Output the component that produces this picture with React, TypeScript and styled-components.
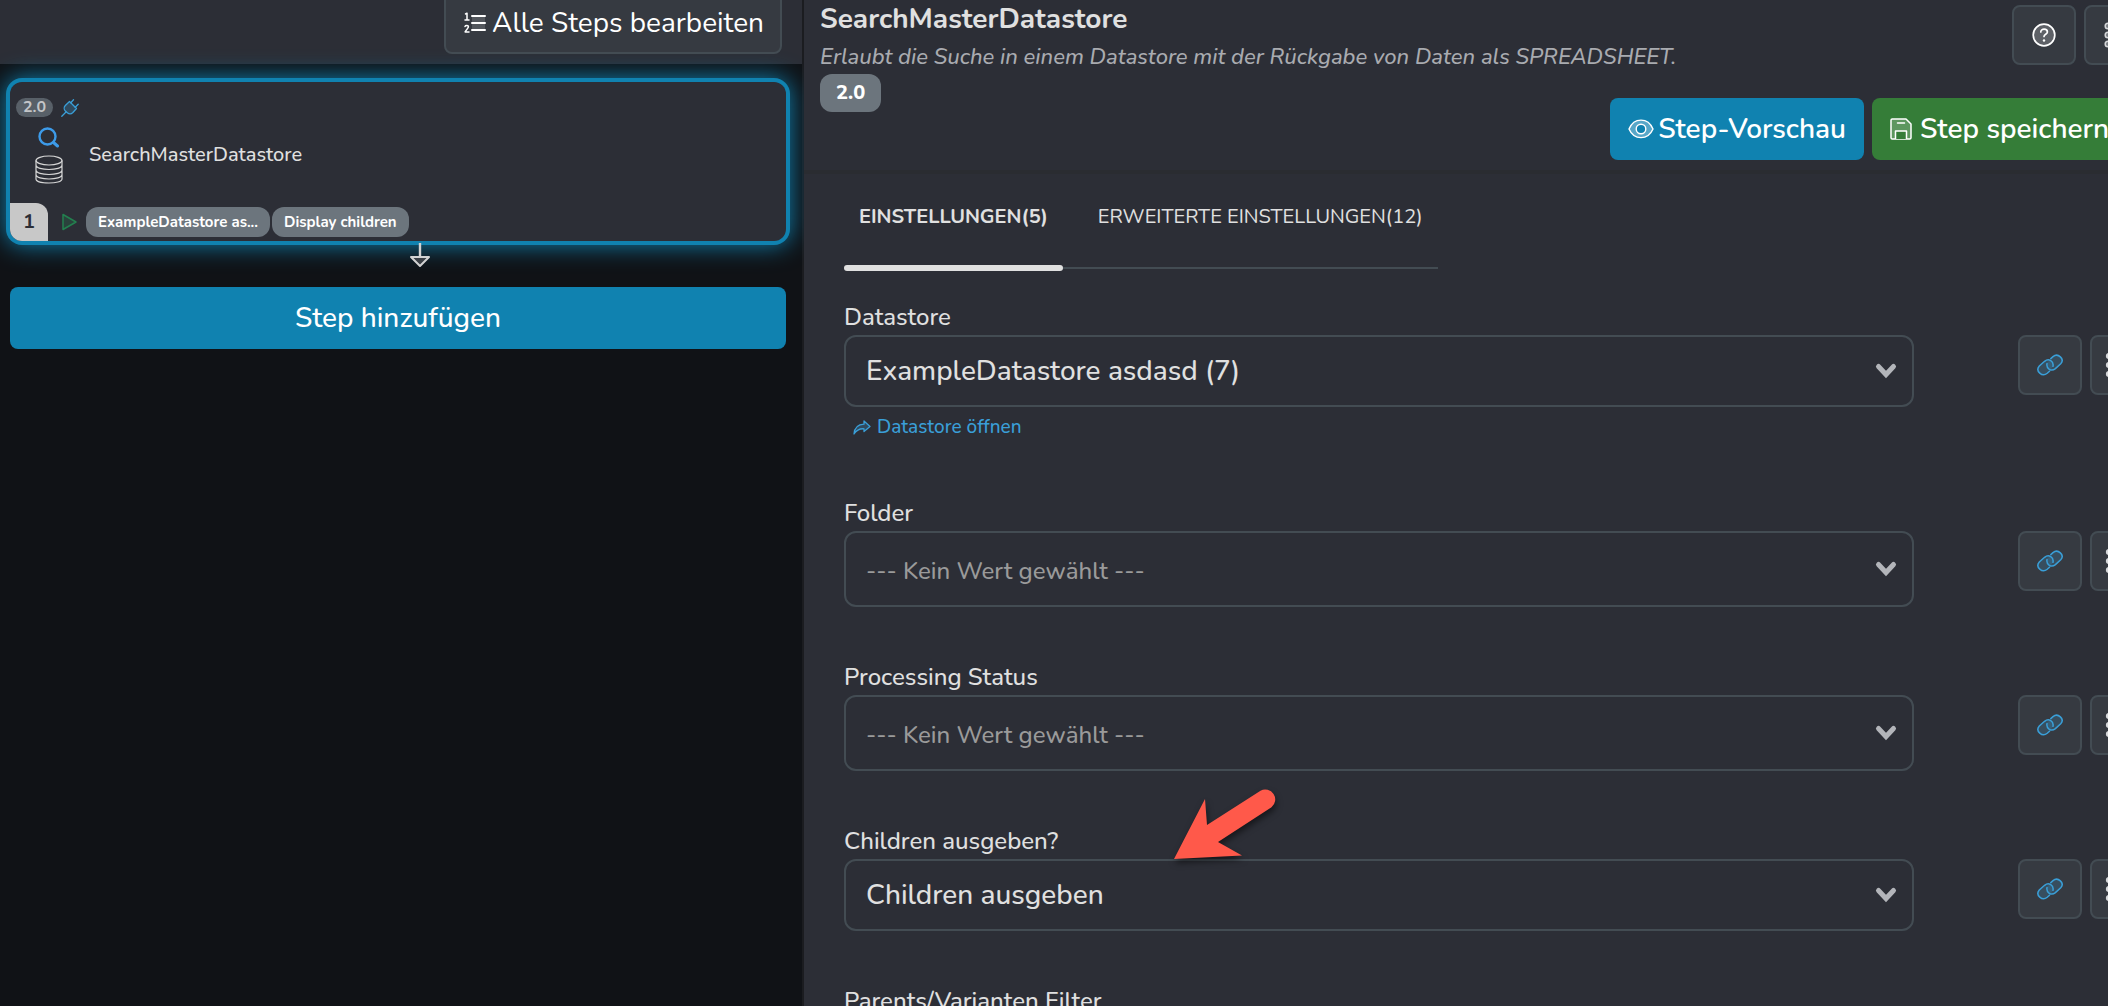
import React from 'react';
import styled, { createGlobalStyle, css } from 'styled-components';

const color = {
  page: '#101216',
  panel: '#2c2e36',
  raised: '#363a41',
  line: '#434c53',
  text: '#e0e0e0',
  muted: '#9a9a9a',
  primary: '#1082b0',
  success: '#357d38',
  link: '#3a9fd8',
  badge: '#6c757d',
};

const GlobalStyle = createGlobalStyle`
  *, *::before, *::after { box-sizing: border-box; }
  body {
    margin: 0;
    background: ${color.page};
    color: ${color.text};
    font-family: Nunito, Lato, "Open Sans", sans-serif;
    font-size: 24px;
    line-height: 32px;
    overflow: hidden;
  }
  button, select { font-family: inherit; margin: 0; }
  svg { display: block; flex: none; }
`;

const Workspace = styled.div`
  display: grid;
  grid-template-columns: 804px minmax(0, 1fr);
  height: 100vh;
  overflow: hidden;
`;

const StepsPanel = styled.aside`
  border-right: 2px solid #1b1c20;
`;

const StepsToolbar = styled.header`
  display: flex;
  align-items: flex-end;
  justify-content: flex-end;
  height: 64px;
  padding: 0 20px 10px;
  overflow: hidden;
  background: ${color.panel};
`;

const buttonBase = css`
  display: flex;
  flex: none;
  align-items: center;
  height: 62px;
  border: 0;
  border-radius: 8px;
  color: #fff;
  font-size: 28px;
  line-height: 36px;
  white-space: nowrap;
`;

const OutlineButton = styled.button`
  ${buttonBase}
  gap: 6px;
  padding: 0 16px 0 18px;
  border: 2px solid ${color.line};
  background: ${color.raised};
  font-weight: 400;
`;

const FilledButton = styled.button<{ $tone: string; $gap: number; $minWidth?: number }>`
  ${buttonBase}
  gap: ${(p) => p.$gap}px;
  min-width: ${(p) => p.$minWidth ?? 0}px;
  padding: 0 18px;
  background: ${(p) => p.$tone};
  font-weight: 600;
`;

const AddStepButton = styled.button`
  ${buttonBase}
  justify-content: center;
  width: 100%;
  background: ${color.primary};
  font-weight: 500;
`;

const StepList = styled.div`
  padding: 18px 16px 0 10px;
`;

const StepCard = styled.article`
  display: flex;
  flex-direction: column;
  justify-content: space-between;
  height: 159px;
  padding-top: 16px;
  border-radius: 12px;
  background: ${color.panel};
  box-shadow: 0 0 0 4px ${color.primary}, 0 0 24px 4px ${color.primary};
`;

const StepMeta = styled.div`
  display: flex;
  align-items: center;
  gap: 8px;
  height: 19px;
  padding-left: 6px;
`;

const VersionTag = styled.span`
  width: 37px;
  border-radius: 10px;
  background: #586068;
  color: #c4c6c8;
  font-size: 16px;
  font-weight: 700;
  line-height: 19px;
  text-align: center;
`;

const StepMain = styled.div`
  display: flex;
  align-items: center;
  gap: 26px;
  padding: 0 0 10px 25px;
`;

const StepIcon = styled.div`
  display: flex;
  flex-direction: column;
  align-items: center;
  gap: 7px;
`;

const StepName = styled.span`
  font-size: 20px;
  font-weight: 500;
`;

const StepFooter = styled.div`
  display: flex;
  align-items: center;
  height: 38px;
`;

const StepNumber = styled.span`
  width: 38px;
  margin-right: 14px;
  border-radius: 0 12px 0 12px;
  background: #c8c8c8;
  color: ${color.panel};
  font-size: 20px;
  font-weight: 700;
  line-height: 38px;
  text-align: center;
`;

const Tags = styled.div`
  display: flex;
  gap: 2px;
  margin-left: 9px;
`;

const Tag = styled.span`
  padding: 0 12px;
  border-radius: 12px;
  background: ${color.badge};
  color: #fff;
  font-size: 15px;
  font-weight: 700;
  line-height: 30px;
`;

const Connector = styled.div`
  display: flex;
  justify-content: center;
  height: 46px;
  padding: 2px 0 0 44px;
`;

const DetailPanel = styled.main`
  overflow: hidden;
  background: ${color.panel};
`;

/* The detail area is wider than its viewport, so its right edge is cut off. */
const DetailBody = styled.div`
  width: calc(100% + 50px);
`;

const DetailHeader = styled.header`
  display: flex;
  justify-content: space-between;
  height: 174px;
  padding: 0 10px 0 16px;
  border-bottom: 4px solid #2a2c31;
`;

const Heading = styled.div`
  display: flex;
  flex: 1 1 0;
  flex-direction: column;
  align-items: flex-start;
  min-width: 0;
`;

const Title = styled.h1`
  margin: 0;
  font-size: 28px;
  font-weight: 700;
  line-height: 38px;
`;

const Subtitle = styled.p`
  margin: 0;
  padding-top: 2px;
  color: #a9abb0;
  font-size: 22px;
  font-style: italic;
  font-weight: 500;
  line-height: 34px;
  white-space: nowrap;
`;

const VersionBadge = styled.span`
  padding: 0 16px;
  border-radius: 12px;
  background: ${color.badge};
  color: #fff;
  font-size: 20px;
  font-weight: 800;
  line-height: 38px;
`;

const Actions = styled.div`
  display: flex;
  flex: none;
  flex-direction: column;
  align-items: flex-end;
  gap: 33px;
  padding-top: 5px;
`;

const ActionRow = styled.div`
  display: flex;
  gap: 8px;
`;

const IconButton = styled.button`
  display: grid;
  place-items: center;
  flex: none;
  width: 64px;
  height: 60px;
  padding: 0;
  border: 2px solid ${color.line};
  border-radius: 8px;
  background: ${color.raised};
  color: ${color.text};
`;

const Tabs = styled.nav`
  display: flex;
  width: max-content;
  margin-left: 40px;
`;

const Tab = styled.button<{ $active?: boolean }>`
  display: flex;
  flex-direction: column;
  padding: 0;
  border: 0;
  background: none;
  color: ${color.text};
  font-size: 20px;
  font-weight: ${(p) => (p.$active ? 700 : 400)};
  line-height: 86px;

  span { padding: 0 15px 0 ${(p) => (p.$active ? 15 : 35)}px; }

  &::after {
    content: '';
    width: 100%;
    height: ${(p) => (p.$active ? 6 : 2)}px;
    margin-top: ${(p) => (p.$active ? 5 : 7)}px;
    border-radius: ${(p) => (p.$active ? 3 : 0)}px;
    background: ${(p) => (p.$active ? color.text : color.line)};
  }
`;

const Form = styled.form`
  display: grid;
  gap: 56px;
  padding: 32px 4px 0 40px;
`;

const FieldRow = styled.div`
  display: grid;
  grid-template-columns: minmax(0, 1fr) auto;
  column-gap: 104px;
`;

const Field = styled.div`
  position: relative;
`;

const Label = styled.label`
  display: block;
  padding-bottom: 4px;
  font-weight: 500;
  line-height: 28px;
`;

const SelectBox = styled.div`
  position: relative;

  svg {
    position: absolute;
    top: 50%;
    right: 16px;
    transform: translateY(-50%);
    pointer-events: none;
  }
`;

const Select = styled.select<{ $empty?: boolean }>`
  display: block;
  width: 100%;
  height: ${(p) => (p.$empty ? 76 : 72)}px;
  padding: ${(p) => (p.$empty ? 4 : 0)}px 60px 0 20px;
  border: 2px solid ${color.line};
  border-radius: 12px;
  background: transparent;
  color: ${(p) => (p.$empty ? color.muted : color.text)};
  font-size: ${(p) => (p.$empty ? 24 : 28)}px;
  font-weight: 500;
  appearance: none;
`;

const OpenLink = styled.a`
  display: inline-flex;
  align-items: center;
  gap: 6px;
  padding: 4px 0 0 9px;
  color: ${color.link};
  font-size: 19px;
  font-weight: 500;
  text-decoration: none;
`;

const RowActions = styled.div`
  display: flex;
  gap: 8px;
  padding-top: 32px;
`;

const Pointer = styled.svg`
  position: absolute;
  top: -38px;
  left: 324px;
  filter: drop-shadow(1px 4px 3px rgba(0, 0, 0, 0.5));
  pointer-events: none;
`;

const ListIcon = () => (
  <svg width="22" height="22" viewBox="0 0 22 22" fill="none" stroke="currentColor" strokeLinecap="round" strokeLinejoin="round">
    <path d="M8 4h13v14H8z" fill="currentColor" opacity=".15" stroke="none" />
    <path d="M8 4h13M8 11h13M8 18h13" strokeWidth="2" />
    <path d="M1.500 2 3 1.200V8M1 8h4M1 14.500c.6-1.400 3.600-1.300 3.400.4-.1 1-1.600 2.300-3.300 5H5" strokeWidth="1.500" />
  </svg>
);

const PlugIcon = () => (
  <svg width="18" height="18" viewBox="0 0 18 18" fill="none" stroke={color.link} strokeWidth="1.300" strokeLinecap="round">
    <path d="m8.500 2.500 7 7-3.600 4c-1.600 1.600-4 1.600-5.600.2L4.400 12c-1.600-1.600-1.600-4-.1-5.500z" fill={color.link} fillOpacity=".25" strokeLinejoin="round" />
    <path d="M9.800 3.800 12.500.8M14.200 8.200l3-2.900M5 13 .8 17.200" />
  </svg>
);

const SearchIcon = () => (
  <svg width="22" height="21" viewBox="0 0 22 21" fill="none" stroke="#3d9be9" strokeLinecap="round">
    <circle cx="9.500" cy="9.500" r="8" strokeWidth="2.400" />
    <path d="m15.500 15.500 4 3.500" strokeWidth="3" />
  </svg>
);

const DatabaseIcon = () => (
  <svg width="28" height="29" viewBox="0 0 28 29" fill="none" stroke="#d6d6d6" strokeWidth="1.200">
    <ellipse cx="14" cy="5.500" rx="13" ry="4.500" />
    <path d="M1 5.500v4.500c0 6 26 6 26 0V5.500M1 10v5c0 6 26 6 26 0v-5M1 15v4.500c0 6 26 6 26 0V15M1 19.500V24c0 5.300 26 5.300 26 0v-4.500" />
  </svg>
);

const PlayIcon = () => (
  <svg width="15" height="18" viewBox="0 0 15 18" fill="#23804f" fillOpacity=".25" stroke="#23804f" strokeWidth="1.500" strokeLinejoin="round">
    <path d="M1 1.500v15L14 9z" />
  </svg>
);

const ArrowDownIcon = () => (
  <svg width="22" height="25" viewBox="0 0 22 25" fill="none" stroke="#d2d2d2" strokeWidth="2" strokeLinejoin="round">
    <path d="M11 0v14" strokeWidth="2.400" />
    <path d="M2 14h18l-9 9z" fill="#3a3f45" />
  </svg>
);

const HelpIcon = () => (
  <svg width="24" height="24" viewBox="0 0 24 24" fill="none" stroke="#fff" strokeLinecap="round">
    <circle cx="12" cy="12" r="10.800" fill="#fff" fillOpacity=".2" strokeWidth="1.700" />
    <path d="M8.800 9c0-3.800 6.600-3.700 6.600 0 0 2.200-3.400 2.200-3.400 4.500" strokeWidth="1.700" />
    <circle cx="12" cy="17.500" r="1.200" fill="#fff" stroke="none" />
  </svg>
);

const GridDotsIcon = ({ hollow }: { hollow?: boolean }) => (
  <svg width={hollow ? 24 : 34} height="26" viewBox={hollow ? '0 0 24 26' : '0 0 34 26'}>
    {[4, 13, 22].map((y) =>
      (hollow ? [4, 12, 20] : [4, 17, 30]).map((x) => (
        <circle
          key={`${x}-${y}`}
          cx={x}
          cy={y}
          r={hollow ? 2.8 : 3.2}
          fill={hollow ? '#777b80' : '#d6d8da'}
          stroke={hollow ? '#d6d8da' : 'none'}
          strokeWidth="1.500"
        />
      )),
    )}
  </svg>
);

const EyeIcon = () => (
  <svg width="26" height="20" viewBox="0 0 26 20" fill="#fff" stroke="#fff" strokeWidth="1.400">
    <path d="M1 10C6-1.800 20-1.800 25 10c-5 11.500-19 11.500-24 0z" fillOpacity=".3" />
    <circle cx="13" cy="10" r="4.800" fill={color.primary} />
  </svg>
);

const SaveIcon = () => (
  <svg width="22" height="22" viewBox="0 0 22 22" fill="none" stroke="#fff" strokeWidth="1.500" strokeLinejoin="round">
    <path d="M1 2.200C1 1.500 1.500 1 2.200 1H16l5 5v13.800c0 .7-.5 1.200-1.200 1.200H2.200C1.500 21 1 20.500 1 19.800z" fill="#fff" fillOpacity=".2" />
    <path d="M5.500 21v-8h11v8" fill={color.success} />
    <path d="M7.500 5h7" strokeLinecap="round" />
  </svg>
);

const LinkIcon = () => (
  <svg width="26" height="22" viewBox="0 0 26 22" fill="none" stroke={color.link} strokeWidth="1.500" strokeLinecap="round">
    <g fill={color.link} fillOpacity=".2">
      <path d="M12.500 17.200 10.200 19.300C5.200 23.500-2 17 2.300 12L7.600 7.300c4.200-3.500 9.400 0 8.400 5" />
      <path d="M13.800 4.600 16 2.600C21-1.500 28 5 23.700 9.800l-5.300 4.800c-4.200 3.500-9.400 0-8.400-5" />
    </g>
  </svg>
);

const ShareIcon = () => (
  <svg width="18" height="15" viewBox="0 0 18 15" fill={color.link} fillOpacity=".25" stroke={color.link} strokeWidth="1.300" strokeLinejoin="round">
    <path d="M11 1l6 5.500-6 5V8.800C6.500 8.500 3.500 10 1 14 1.500 8 5 4.500 11 4.200z" />
  </svg>
);

const ChevronIcon = () => (
  <svg width="24" height="18" viewBox="0 0 24 18" fill="none" stroke="#b3b5ba" strokeWidth="5" strokeLinecap="round">
    <path d="m4.500 4.500 7.500 8 7.500-8" />
  </svg>
);

const PointerArrow = () => (
  <Pointer width="112" height="80" viewBox="0 0 112 80" aria-hidden="true">
    <path d="M6 70 37 10l2 26L92.500 1.700a10 10 0 0 1 11 16.600L50 53l24 13.500z" fill="#ff594a" />
  </Pointer>
);

interface FieldData {
  id: string;
  label: string;
  value?: string;
  linkText?: string;
  marked?: boolean;
}

const fields: FieldData[] = [
  { id: 'datastore', label: 'Datastore', value: 'ExampleDatastore asdasd (7)', linkText: 'Datastore öffnen' },
  { id: 'folder', label: 'Folder' },
  { id: 'status', label: 'Processing Status' },
  { id: 'children', label: 'Children ausgeben?', value: 'Children ausgeben', marked: true },
  { id: 'parents', label: 'Parents/Varianten Filter' },
];

const SelectField = ({ id, label, value, linkText, marked }: FieldData) => (
  <FieldRow>
    <Field>
      <Label htmlFor={id}>{label}</Label>
      <SelectBox>
        <Select id={id} $empty={!value}>
          <option>{value ?? '--- Kein Wert gewählt ---'}</option>
        </Select>
        <ChevronIcon />
      </SelectBox>
      {linkText && (
        <OpenLink href="#datastore">
          <ShareIcon />
          {linkText}
        </OpenLink>
      )}
      {marked && <PointerArrow />}
    </Field>
    <RowActions>
      <IconButton type="button" aria-label={`${label} verknüpfen`}>
        <LinkIcon />
      </IconButton>
      <IconButton type="button" aria-label={`${label} Optionen`}>
        <GridDotsIcon />
      </IconButton>
    </RowActions>
  </FieldRow>
);

export default function App() {
  return (
    <Workspace>
      <GlobalStyle />
      <StepsPanel>
        <StepsToolbar>
          <OutlineButton type="button">
            <ListIcon />
            Alle Steps bearbeiten
          </OutlineButton>
        </StepsToolbar>
        <StepList>
          <StepCard>
            <StepMeta>
              <VersionTag>2.0</VersionTag>
              <PlugIcon />
            </StepMeta>
            <StepMain>
              <StepIcon>
                <SearchIcon />
                <DatabaseIcon />
              </StepIcon>
              <StepName>SearchMasterDatastore</StepName>
            </StepMain>
            <StepFooter>
              <StepNumber>1</StepNumber>
              <PlayIcon />
              <Tags>
                <Tag>ExampleDatastore as...</Tag>
                <Tag>Display children</Tag>
              </Tags>
            </StepFooter>
          </StepCard>
          <Connector>
            <ArrowDownIcon />
          </Connector>
          <AddStepButton type="button">Step hinzufügen</AddStepButton>
        </StepList>
      </StepsPanel>
      <DetailPanel>
        <DetailBody>
          <DetailHeader>
            <Heading>
              <Title>SearchMasterDatastore</Title>
              <Subtitle>Erlaubt die Suche in einem Datastore mit der Rückgabe von Daten als SPREADSHEET.</Subtitle>
              <VersionBadge>2.0</VersionBadge>
            </Heading>
            <Actions>
              <ActionRow>
                <IconButton type="button" aria-label="Hilfe">
                  <HelpIcon />
                </IconButton>
                <IconButton type="button" aria-label="Optionen">
                  <GridDotsIcon hollow />
                </IconButton>
              </ActionRow>
              <ActionRow>
                <FilledButton type="button" $tone={color.primary} $gap={4}>
                  <EyeIcon />
                  Step-Vorschau
                </FilledButton>
                <FilledButton type="button" $tone={color.success} $gap={8} $minWidth={276}>
                  <SaveIcon />
                  Step speichern
                </FilledButton>
              </ActionRow>
            </Actions>
          </DetailHeader>
          <Tabs>
            <Tab type="button" $active>
              <span>EINSTELLUNGEN(5)</span>
            </Tab>
            <Tab type="button">
              <span>ERWEITERTE EINSTELLUNGEN(12)</span>
            </Tab>
          </Tabs>
          <Form>
            {fields.map((field) => (
              <SelectField key={field.id} {...field} />
            ))}
          </Form>
        </DetailBody>
      </DetailPanel>
    </Workspace>
  );
}
